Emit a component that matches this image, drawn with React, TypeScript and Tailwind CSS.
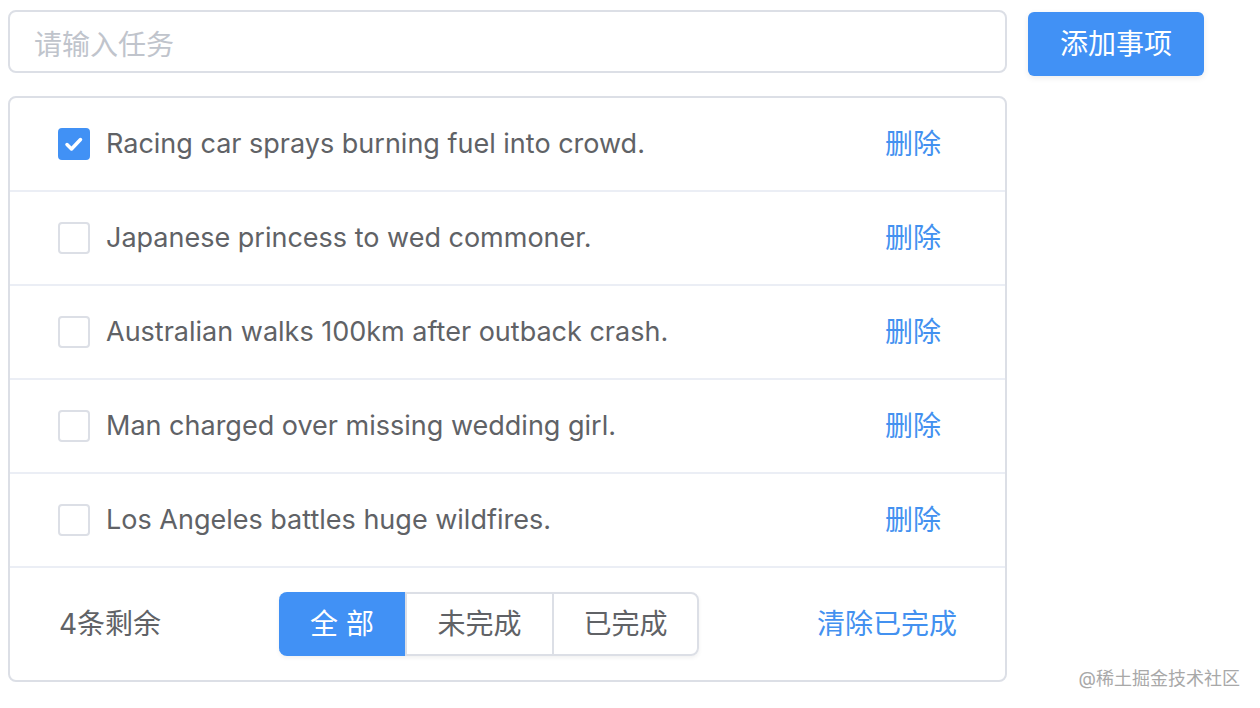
import { useState } from 'react';

const initial = [
  { id: 1, text: 'Racing car sprays burning fuel into crowd.', done: true },
  { id: 2, text: 'Japanese princess to wed commoner.', done: false },
  { id: 3, text: 'Australian walks 100km after outback crash.', done: false },
  { id: 4, text: 'Man charged over missing wedding girl.', done: false },
  { id: 5, text: 'Los Angeles battles huge wildfires.', done: false },
];

export default function App() {
  const [todos, setTodos] = useState(initial);
  const [value, setValue] = useState('');
  const [filter, setFilter] = useState<'all' | 'active' | 'done'>('all');

  const left = todos.filter((t) => !t.done).length;

  function add() {
    if (!value.trim()) return;
    setTodos((list) => [...list, { id: Date.now(), text: value.trim(), done: false }]);
    setValue('');
  }

  function toggle(id: number) {
    setTodos((list) => list.map((t) => (t.id === id ? { ...t, done: !t.done } : t)));
  }

  function remove(id: number) {
    setTodos((list) => list.filter((t) => t.id !== id));
  }

  const shown = todos.filter((t) => (filter === 'all' ? true : filter === 'done' ? t.done : !t.done));

  const tabs: { key: 'all' | 'active' | 'done'; label: string }[] = [
    { key: 'all', label: '全 部' },
    { key: 'active', label: '未完成' },
    { key: 'done', label: '已完成' },
  ];

  return (
    <div
      className="relative w-[1260px] h-[708px] bg-white text-[#606266]"
      style={{ fontFamily: 'Inter, "Noto Sans CJK SC", sans-serif' }}
    >
      <div className="flex items-start pl-[8px] pt-[10px] gap-[21px]">
        <div className="w-[999px] flex flex-col gap-[23px]">
          <input
            value={value}
            onChange={(e) => setValue(e.target.value)}
            placeholder="请输入任务"
            className="w-full h-[63px] border-2 border-[#dcdfe6] rounded-[8px] pl-[24px] pr-[20px] pt-[6px] text-[28px] text-[#606266] placeholder:text-[#c0c4cc] outline-none"
          />

          {/* 列表 */}
          <div className="border-2 border-[#dcdfe6] rounded-[8px]">
            {shown.map((t) => (
              <div key={t.id} className="h-[94px] flex items-center pl-[48px] pr-[64px] border-b-2 border-[#ebeef5]">
                <button
                  onClick={() => toggle(t.id)}
                  className={
                    'w-[32px] h-[32px] rounded-[4px] flex items-center justify-center shrink-0 ' +
                    (t.done ? 'bg-[#4191f5] border-2 border-[#4191f5]' : 'bg-white border-2 border-[#dcdfe6]')
                  }
                >
                  {t.done && (
                    <svg width="22" height="22" viewBox="0 0 22 22" fill="none">
                      <path d="M4 11.5l4.5 4.5 9-9.5" stroke="white" strokeWidth="3.5" strokeLinecap="round" strokeLinejoin="round" />
                    </svg>
                  )}
                </button>
                <span className="ml-[16px] text-[27px] text-[#606266] flex-1">{t.text}</span>
                <button onClick={() => remove(t.id)} className="text-[28px] text-[#4391f0]">
                  删除
                </button>
              </div>
            ))}

            <div className="h-[112px] flex items-center pl-[49px] pr-[48px]">
              <span className="text-[28px] text-[#606266] w-[220px]">{left}条剩余</span>
              <div className="flex h-[64px] shadow-[0_2px_4px_rgba(0,0,0,0.06)] rounded-[8px]">
                {tabs.map((tab, i) => {
                  const active = filter === tab.key;
                  return (
                    <button
                      key={tab.key}
                      onClick={() => setFilter(tab.key)}
                      className={
                        'h-full text-[28px] ' +
                        (i === 0 ? 'w-[126px] rounded-l-[8px] ' : 'w-[147px] ') +
                        (i === 2 ? 'rounded-r-[8px] border-r-2 ' : '') +
                        (active
                          ? 'bg-[#4191f5] text-white border-y-2 border-[#4191f5]'
                          : 'bg-white text-[#606266] border-y-2 border-l-2 border-[#dcdfe6]')
                      }
                    >
                      {tab.label}
                    </button>
                  );
                })}
              </div>
              <button
                onClick={() => setTodos((list) => list.filter((t) => !t.done))}
                className="ml-auto text-[28px] text-[#4391f0]"
              >
                清除已完成
              </button>
            </div>
          </div>
        </div>

        <button
          onClick={add}
          className="mt-[2px] w-[176px] h-[64px] rounded-[6px] bg-[#4191f5] text-white text-[28px] shadow-[0_2px_6px_rgba(0,0,0,0.08)]"
        >
          添加事项
        </button>
      </div>

      <div className="absolute right-[20px] top-[665px] text-[18px] text-[#a8a8a8]">@稀土掘金技术社区</div>
    </div>
  );
}
